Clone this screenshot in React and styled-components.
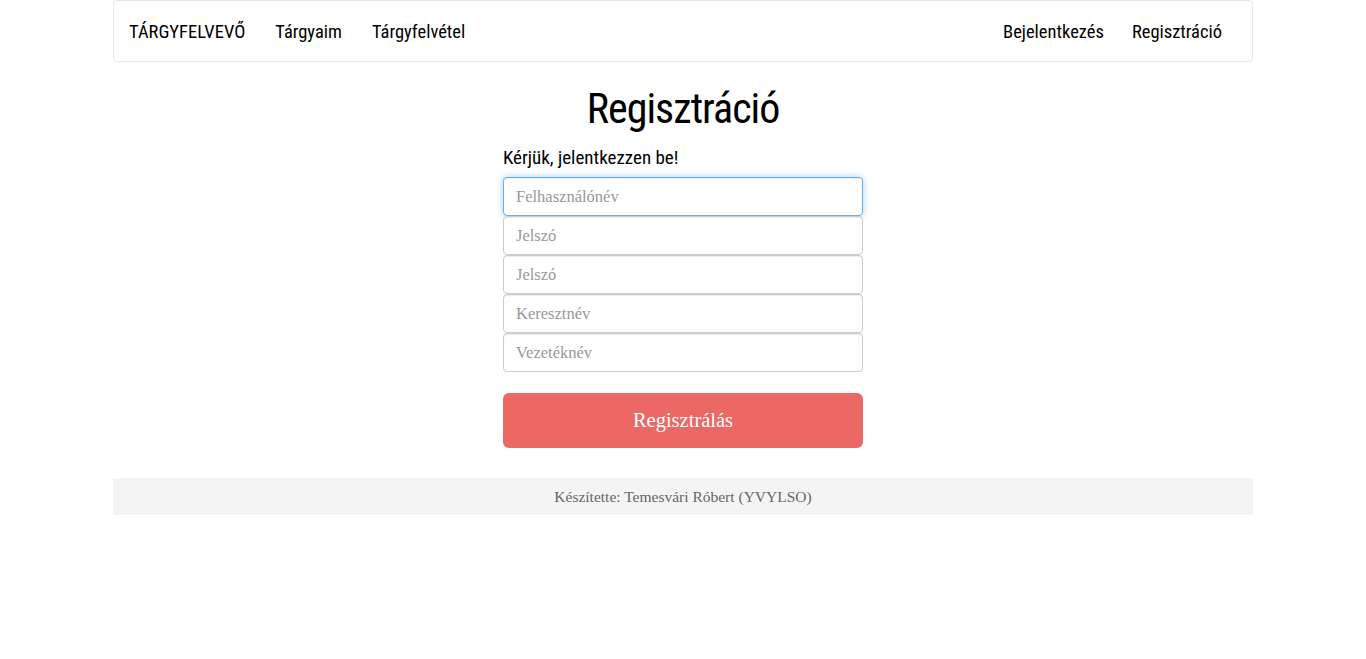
import styled, { createGlobalStyle } from 'styled-components';

const GlobalStyle = createGlobalStyle`
  * { box-sizing: border-box; }
  body {
    margin: 0;
    background: #fff;
    color: #222;
    font-family: "Liberation Serif", Georgia, serif;
    font-size: 15px;
  }
`;

const headFont = `Roboto, "Open Sans", "Liberation Sans", sans-serif`;

// styled-components
const StPage = styled.div`
  width: 1140px;
  margin: 0 auto;
`;
const StNav = styled.nav`
  display: flex;
  align-items: center;
  justify-content: space-between;
  height: 62px;
  padding: 2px 15px 0;
  border: 1px solid #e7e7e7;
  border-radius: 4px;
  font-family: ${headFont};
  font-stretch: 75%;
  font-size: 18.5px;
  color: #000;
`;
const StNavGroup = styled.ul`
  display: flex;
  align-items: center;
  margin: 0;
  padding: 0;
  list-style: none;
`;
const StBrand = styled.a`
  padding-right: 15px;
  color: #000;
  text-decoration: none;
  cursor: pointer;
`;
const StNavLink = styled.li`
  padding: 0 ${({ $tight }) => ($tight ? '13px' : '15px')};
  cursor: pointer;
`;
const StMain = styled.main`
  display: flex;
  flex-direction: column;
  align-items: center;
  padding-top: 24px;
`;
const StTit = styled.h1`
  margin: 0 0 16px;
  font-family: ${headFont};
  font-stretch: 75%;
  font-size: 42px;
  font-weight: 400;
  letter-spacing: -1px;
  line-height: 1.1;
  color: #000;
`;
const StForm = styled.form`
  display: flex;
  flex-direction: column;
  width: 360px;
`;
const StLabel = styled.h2`
  margin: 0 0 8px;
  font-family: ${headFont};
  font-stretch: 75%;
  font-size: 19px;
  font-weight: 400;
  line-height: 1.1;
  color: #000;
`;
const StInput = styled.input`
  height: 39px;
  padding: 0 12px;
  border: 1px solid ${({ $focus }) => ($focus ? '#66afe9' : '#ccc')};
  border-radius: 4px;
  font-family: "Liberation Serif", Georgia, serif;
  font-size: 16.5px;
  color: #555;
  outline: none;
  box-shadow: ${({ $focus }) =>
    $focus
      ? 'inset 0 1px 1px rgba(0,0,0,.075), 0 0 6px rgba(102,175,233,.6)'
      : 'inset 0 1px 1px rgba(0,0,0,.075)'};
  &::placeholder {
    color: #999;
  }
`;
const StButton = styled.button`
  height: 55px;
  margin-top: 21px;
  border: none;
  border-radius: 6px;
  background: #eb6864;
  color: #fff;
  font-family: "Liberation Serif", Georgia, serif;
  font-size: 20.5px;
  cursor: pointer;
`;
const StFooter = styled.footer`
  margin-top: 30px;
  height: 37px;
  display: flex;
  align-items: center;
  justify-content: center;
  background: #f4f4f4;
  color: #666;
  font-size: 15.5px;
`;

const fields = [
  { ph: 'Felhasználónév', type: 'text', focus: true },
  { ph: 'Jelszó', type: 'password' },
  { ph: 'Jelszó', type: 'password' },
  { ph: 'Keresztnév', type: 'text' },
  { ph: 'Vezetéknév', type: 'text' },
];

const App = () => {
  return (
    <>
      <GlobalStyle />
      <StPage>
        <StNav>
          <StNavGroup>
            <StBrand>TÁRGYFELVEVŐ</StBrand>
            <StNavLink>Tárgyaim</StNavLink>
            <StNavLink>Tárgyfelvétel</StNavLink>
          </StNavGroup>
          <StNavGroup>
            <StNavLink $tight>Bejelentkezés</StNavLink>
            <StNavLink>Regisztráció</StNavLink>
          </StNavGroup>
        </StNav>
        <StMain>
          <StTit>Regisztráció</StTit>
          <StForm onSubmit={(e) => e.preventDefault()}>
            <StLabel>Kérjük, jelentkezzen be!</StLabel>
            {fields.map((el, idx) => (
              <StInput key={idx} type={el.type} placeholder={el.ph} $focus={el.focus} />
            ))}
            <StButton type="submit">Regisztrálás</StButton>
          </StForm>
        </StMain>
        <StFooter>Készítette: Temesvári Róbert (YVYLSO)</StFooter>
      </StPage>
    </>
  );
};

export default App;
